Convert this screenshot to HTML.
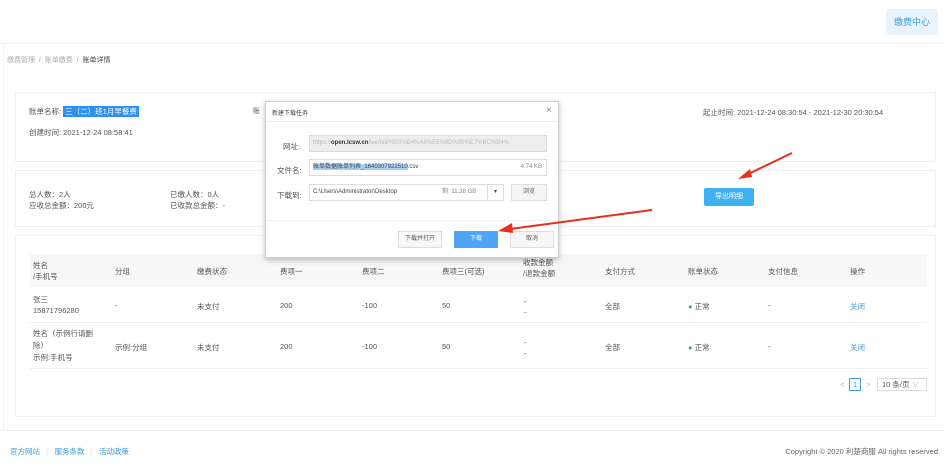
<!DOCTYPE html>
<html><head><meta charset="utf-8"><style>
*{margin:0;padding:0;box-sizing:border-box}
body{width:944px;height:470px;overflow:hidden;background:#fff;font-family:"Liberation Sans","Noto Sans CJK SC",sans-serif;font-size:7.5px;color:#555;position:relative}
.a{position:absolute;white-space:nowrap}
.card{position:absolute;border:1px solid #f0f0f0;background:#fff}
.blue{color:#3a9be0}
</style></head><body>
<div class="a" style="left:0;top:0;width:944px;height:44px;border-bottom:1px solid #eee"></div>
<div class="a" style="left:886px;top:9px;width:52px;height:26px;background:#e8f4fd;border-radius:3px;color:#3a9be0;font-size:9px;line-height:26px;text-align:center">缴费中心</div>
<div class="a" style="left:0;top:44px;width:4px;height:386px;border-right:1px solid #f2f2f2"></div>
<div class="a" style="left:7px;top:55px;color:#aaa;font-size:7px">缴费管理 &nbsp;/&nbsp; 账单缴费 &nbsp;/&nbsp; <span style="color:#444">账单详情</span></div>

<div class="card" style="left:15px;top:92px;width:921px;height:70px"></div>
<div class="a" style="left:29px;top:106px">账单名称: <span style="background:#2f8ff0;color:#fff;padding:1px 2px">三（二）班1月早餐费</span></div>
<div class="a" style="left:29px;top:127px">创建时间: 2021-12-24 08:58:41</div>
<div class="a" style="left:703px;top:107px">起止时间: 2021-12-24 08:30:54 - 2021-12-30 20:30:54</div>

<div class="card" style="left:15px;top:170px;width:921px;height:57px"></div>
<div class="a" style="left:29px;top:189px;line-height:11px">总人数：2人<br>应收总金额：200元</div>
<div class="a" style="left:170px;top:189px;line-height:11px">已缴人数：0人<br>已收款总金额：-</div>
<div class="a" style="left:704px;top:188px;width:50px;height:18px;background:#3fb0f0;color:#fff;border-radius:2px;text-align:center;line-height:18px;font-size:7px">导出明细</div>

<div class="card" style="left:15px;top:235px;width:921px;height:182px"></div>
<div class="a" style="left:30px;top:254px;width:897px;height:33px;background:#f7f7f7"></div>
<div class="a" style="left:30px;top:322px;width:897px;height:1px;background:#eee"></div>
<div class="a" style="left:30px;top:368px;width:897px;height:1px;background:#eee"></div>
<div class="a" style="left:33px;top:260px;line-height:11px">姓名<br>/手机号</div>
<div class="a" style="left:115px;top:266px">分组</div><div class="a" style="left:197px;top:266px">缴费状态</div><div class="a" style="left:280px;top:266px">费项一</div><div class="a" style="left:362px;top:266px">费项二</div><div class="a" style="left:442px;top:266px">费项三(可选)</div>
<div class="a" style="left:523px;top:257px;line-height:11px">收款金额<br>/退款金额</div>
<div class="a" style="left:605px;top:266px">支付方式</div><div class="a" style="left:688px;top:266px">账单状态</div><div class="a" style="left:768px;top:266px">支付信息</div><div class="a" style="left:850px;top:266px">操作</div>

<div class="a" style="left:33px;top:294px;line-height:11px">张三<br>15871796280</div>
<div class="a" style="left:115px;top:301px">-</div><div class="a" style="left:197px;top:301px">未支付</div><div class="a" style="left:280px;top:301px">200</div><div class="a" style="left:362px;top:301px">-100</div><div class="a" style="left:442px;top:301px">50</div>
<div class="a" style="left:524px;top:296px;line-height:11px">-<br>-</div><div class="a" style="left:605px;top:301px">全部</div>
<div class="a" style="left:688px;top:301px"><span style="color:#2bb38a">●</span> 正常</div><div class="a" style="left:768px;top:301px">-</div><div class="a blue" style="left:850px;top:301px">关闭</div>

<div class="a" style="left:33px;top:328px;line-height:12px">姓名（示例行请删<br>除）<br>示例:手机号</div>
<div class="a" style="left:115px;top:342px">示例:分组</div><div class="a" style="left:197px;top:342px">未支付</div><div class="a" style="left:280px;top:342px">200</div><div class="a" style="left:362px;top:342px">-100</div><div class="a" style="left:442px;top:342px">50</div>
<div class="a" style="left:524px;top:337px;line-height:11px">-<br>-</div><div class="a" style="left:605px;top:342px">全部</div>
<div class="a" style="left:688px;top:342px"><span style="color:#2bb38a">●</span> 正常</div><div class="a" style="left:768px;top:342px">-</div><div class="a blue" style="left:850px;top:342px">关闭</div>

<div class="a" style="left:840px;top:380px;color:#bbb">&lt;</div>
<div class="a" style="left:849px;top:378px;width:12px;height:13px;border:1px solid #3a9be0;color:#3a9be0;text-align:center;line-height:11px">1</div>
<div class="a" style="left:866px;top:380px;color:#bbb">&gt;</div>
<div class="a" style="left:877px;top:378px;width:50px;height:13px;border:1px solid #ddd;line-height:11px;padding-left:4px">10 条/页 <span style="color:#bbb">∨</span></div>

<div class="a" style="left:0;top:430px;width:944px;height:1px;background:#f0f0f0"></div>
<div class="a blue" style="left:10px;top:446px">官方网站 &nbsp;&nbsp;<span style="color:#ddd">|</span>&nbsp;&nbsp; 服务条款 &nbsp;&nbsp;<span style="color:#ddd">|</span>&nbsp;&nbsp; 活动政策</div>
<div class="a" style="right:6px;top:446px;color:#666">Copyright © 2020 利楚商服 All rights reserved</div>

<!-- dialog -->
<div class="a" style="left:265px;top:101px;width:294px;height:157px;background:#fff;border:1px solid #ccc;box-shadow:0 2px 6px rgba(0,0,0,.25)">
 <div class="a" style="left:0;top:0;width:292px;height:20px;border-bottom:1px solid #eee"></div>
 <div class="a" style="left:6px;top:6px;font-size:6px;color:#444">新建下载任务</div>
 <div class="a" style="left:280px;top:3px;font-size:10px;color:#888">×</div>
 <div class="a" style="left:17px;top:39px">网址:</div>
 <div class="a" style="left:43px;top:33px;width:238px;height:17px;background:#eee;border:1px solid #ddd;font-size:6px;line-height:15px;padding-left:3px;color:#bbb;overflow:hidden">https://<b style="color:#333">open.lcsw.cn</b>/lee/bill/%E8%B4%A6%E5%8D%95%E7%BC%B4%</div>
 <div class="a" style="left:11px;top:63px">文件名:</div>
 <div class="a" style="left:43px;top:57px;width:238px;height:17px;border:1px solid #ddd;font-size:6px;line-height:15px;padding-left:3px;color:#444"><span style="background:#a8cff5">账单数据账单列表_1640307922510</span>.csv<span style="position:absolute;right:4px;color:#888">4.74 KB</span></div>
 <div class="a" style="left:11px;top:88px">下载到:</div>
 <div class="a" style="left:43px;top:82px;width:195px;height:17px;border:1px solid #ddd;font-size:6px;line-height:15px;padding-left:3px;color:#444">C:\Users\Administrator\Desktop<span style="position:absolute;left:132px;color:#888">剩: 11.38 GB</span><span style="position:absolute;right:0;top:0;width:16px;height:15px;border-left:1px solid #ddd;text-align:center">▾</span></div>
 <div class="a" style="left:245px;top:82px;width:36px;height:17px;border:1px solid #ddd;background:#f5f5f5;text-align:center;line-height:15px;font-size:6px">浏览</div>
 <div class="a" style="left:0;top:118px;width:292px;height:1px;background:#eee"></div>
 <div class="a" style="left:132px;top:129px;width:44px;height:17px;border:1px solid #ddd;background:#f7f7f7;text-align:center;line-height:15px;font-size:6px">下载并打开</div>
 <div class="a" style="left:188px;top:129px;width:44px;height:17px;background:#4ea5f5;color:#fff;text-align:center;line-height:17px;font-size:6px">下载</div>
 <div class="a" style="left:244px;top:129px;width:44px;height:17px;border:1px solid #ddd;background:#f7f7f7;text-align:center;line-height:15px;font-size:6px">取消</div>
</div>
<div class="a" style="left:253px;top:106px;font-size:7px">账</div>
<svg class="a" style="left:0;top:0" width="944" height="470">
 <g stroke="#e8301c" stroke-width="2" fill="#e8301c">
  <line x1="792" y1="153" x2="746" y2="175"/><polygon points="738,179 750,169 752,177" stroke="none"/>
  <line x1="652" y1="210" x2="510" y2="229"/><polygon points="498,231 512,223 513,233" stroke="none"/>
 </g>
</svg>
</body></html>
